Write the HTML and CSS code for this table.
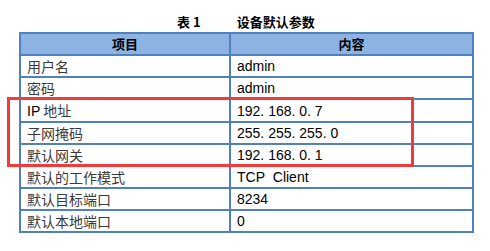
FILE: index.html
```html
<!DOCTYPE html>
<html lang="zh">
<head>
<meta charset="utf-8">
<link rel="stylesheet" href="styles.css">
</head>
<body>
<div class="page">
  <div class="caption"><span class="num">表 1</span><span>设备默认参数</span></div>
  <table class="params">
    <thead>
      <tr><th class="c1">项目</th><th class="c2">内容</th></tr>
    </thead>
    <tbody>
      <tr><td>用户名</td><td class="val">admin</td></tr>
      <tr><td>密码</td><td class="val">admin</td></tr>
      <tr><td><span class="lat">IP</span> 地址</td><td class="val">192. 168. 0. 7</td></tr>
      <tr><td>子网掩码</td><td class="val">255. 255. 255. 0</td></tr>
      <tr><td>默认网关</td><td class="val">192. 168. 0. 1</td></tr>
      <tr><td>默认的工作模式</td><td class="val">TCP&nbsp; Client</td></tr>
      <tr><td>默认目标端口</td><td class="val">8234</td></tr>
      <tr><td>默认本地端口</td><td class="val">0</td></tr>
    </tbody>
  </table>
  <div class="highlight"></div>
</div>
</body>
</html>
```
FILE: styles.css
```css
html, body {
  margin: 0;
  padding: 0;
  background: #ffffff;
}
.page {
  position: relative;
  width: 490px;
  height: 251px;
  overflow: hidden;
}
.caption {
  height: 32px;
  box-sizing: border-box;
  padding-top: 14px;
  padding-left: 177px;
  font-family: "Noto Sans CJK SC", sans-serif;
  font-weight: 700;
  font-size: 13px;
  line-height: 16px;
  color: #000;
  display: flex;
  gap: 36px;
}
.params {
  margin-left: 19px;
  width: 455px;
  border-collapse: collapse;
  border: 2px solid #4f81bd;
  table-layout: fixed;
}
.params th, .params td {
  border: 2px solid #4f81bd;
  height: 20px;
  padding: 0 0 0 6px;
  font-size: 14px;
  line-height: 20px;
  text-align: left;
}
.params th {
  background: #8db3e2;
  font-family: "Noto Sans CJK SC", sans-serif;
  font-weight: 700;
  color: #000;
  text-align: center;
  padding: 0;
  font-size: 13px;
}
.params .c1 { width: 208px; }
.params td {
  font-family: "Noto Sans CJK SC", sans-serif;
  color: #3a3a3a;
  font-weight: 400;
}
.params td.val {
  font-family: "Liberation Sans", "Noto Sans CJK SC", sans-serif;
  color: #000;
}
.lat {
  font-family: "Liberation Sans", sans-serif;
  color: #000;
}
.highlight {
  position: absolute;
  left: 7px;
  top: 97px;
  width: 407px;
  height: 70px;
  box-sizing: border-box;
  border: 3px solid #f23a3a;
}
```
